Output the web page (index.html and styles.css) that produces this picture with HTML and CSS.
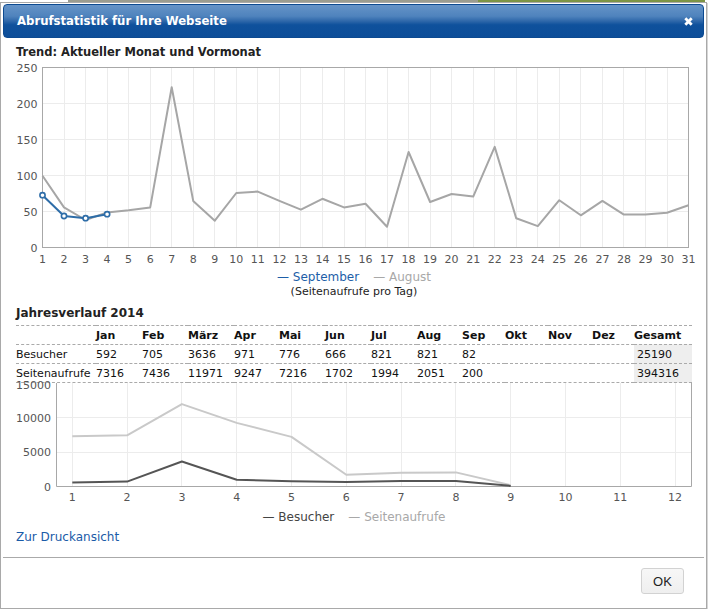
FILE: index.html
```html
<!DOCTYPE html>
<html lang="de">
<head>
<meta charset="utf-8">
<title>Abrufstatistik</title>
<link rel="stylesheet" href="styles.css">
</head>
<body>
<div class="dialog">
  <div class="titlebar">
    <span class="title">Abrufstatistik für Ihre Webseite</span>
    <svg class="close" width="9" height="9" viewBox="0 0 9 9"><path d="M1.3 1.3 L7.7 7.7 M7.7 1.3 L1.3 7.7"/></svg>
  </div>
  <div class="content">
    <h2 class="h-trend">Trend: Aktueller Monat und Vormonat</h2>
    <svg class="chart" width="676" height="209" viewBox="0 0 676 209">
      <path class="grid" d="M48.5 7V187M69.5 7V187M91.5 7V187M112.5 7V187M134.5 7V187M155.5 7V187M177.5 7V187M198.5 7V187M220.5 7V187M241.5 7V187M263.5 7V187M284.5 7V187M306.5 7V187M328.5 7V187M349.5 7V187M371.5 7V187M392.5 7V187M414.5 7V187M435.5 7V187M457.5 7V187M478.5 7V187M500.5 7V187M521.5 7V187M543.5 7V187M564.5 7V187M586.5 7V187M607.5 7V187M629.5 7V187M651.5 7V187M26.5 43.5H672.5M26.5 79.5H672.5M26.5 115.5H672.5M26.5 151.5H672.5"/>
      <rect class="frame" x="26.5" y="7.5" width="646" height="180"/>
      <polyline class="l-aug" points="26.5,115.7 48,147.4 69.6,160 91.1,152.4 112.6,150.3 134.2,147.4 155.7,27.2 177.2,140.9 198.8,160.7 220.3,133 241.8,131.6 263.4,140.9 284.9,149.6 306.4,138.8 328,147.4 349.5,143.8 371,166.8 392.6,92 414.1,142 435.6,134 457.2,136.6 478.7,86.9 500.2,158.2 521.8,166.1 543.3,140.2 564.8,155.3 586.4,140.9 607.9,154.6 629.4,154.6 651,152.7 672.5,145.2"/>
      <polyline class="l-sep" points="26.5,135.2 48,156 69.6,158.2 91.1,154.2"/>
      <g class="dots">
        <circle cx="26.5" cy="135.2" r="2.6"/>
        <circle cx="48" cy="156" r="2.6"/>
        <circle cx="69.6" cy="158.2" r="2.6"/>
        <circle cx="91.1" cy="154.2" r="2.6"/>
      </g>
      <g class="ax ax-y">
        <text x="21.5" y="11.5">250</text>
        <text x="21.5" y="47.5">200</text>
        <text x="21.5" y="83.5">150</text>
        <text x="21.5" y="119.5">100</text>
        <text x="21.5" y="155.5">50</text>
        <text x="21.5" y="191.5">0</text>
      </g>
      <g class="ax ax-x">
        <text x="26.5" y="203">1</text><text x="48" y="203">2</text><text x="69.6" y="203">3</text><text x="91.1" y="203">4</text><text x="112.6" y="203">5</text><text x="134.2" y="203">6</text><text x="155.7" y="203">7</text><text x="177.2" y="203">8</text><text x="198.8" y="203">9</text><text x="220.3" y="203">10</text><text x="241.8" y="203">11</text><text x="263.4" y="203">12</text><text x="284.9" y="203">13</text><text x="306.4" y="203">14</text><text x="328" y="203">15</text><text x="349.5" y="203">16</text><text x="371" y="203">17</text><text x="392.6" y="203">18</text><text x="414.1" y="203">19</text><text x="435.6" y="203">20</text><text x="457.2" y="203">21</text><text x="478.7" y="203">22</text><text x="500.2" y="203">23</text><text x="521.8" y="203">24</text><text x="543.3" y="203">25</text><text x="564.8" y="203">26</text><text x="586.4" y="203">27</text><text x="607.9" y="203">28</text><text x="629.4" y="203">29</text><text x="651" y="203">30</text><text x="672.5" y="203">31</text>
      </g>
    </svg>
    <div class="legend">
      <span class="lg-sep">— September</span>
      <span class="lg-aug">— August</span>
    </div>
    <div class="subtitle">(Seitenaufrufe pro Tag)</div>
    <h2 class="h-year">Jahresverlauf 2014</h2>
    <table class="year">
      <colgroup>
        <col class="w80"><col class="w46"><col class="w46"><col class="w46"><col class="w45"><col class="w46"><col class="w46"><col class="w46"><col class="w45"><col class="w43"><col class="w43"><col class="w44"><col class="w42"><col class="w58">
      </colgroup>
      <thead>
        <tr><th></th><th>Jan</th><th>Feb</th><th>März</th><th>Apr</th><th>Mai</th><th>Jun</th><th>Jul</th><th>Aug</th><th>Sep</th><th>Okt</th><th>Nov</th><th>Dez</th><th>Gesamt</th></tr>
      </thead>
      <tbody>
        <tr><td>Besucher</td><td>592</td><td>705</td><td>3636</td><td>971</td><td>776</td><td>666</td><td>821</td><td>821</td><td>82</td><td></td><td></td><td></td><td class="total">25190</td></tr>
        <tr><td>Seitenaufrufe</td><td>7316</td><td>7436</td><td>11971</td><td>9247</td><td>7216</td><td>1702</td><td>1994</td><td>2051</td><td>200</td><td></td><td></td><td></td><td class="total">394316</td></tr>
      </tbody>
    </table>
    <svg class="chart" width="676" height="126" viewBox="0 0 676 126">
      <path class="grid" d="M56.5 0V103M111.5 0V103M165.5 0V103M220.5 0V103M275.5 0V103M330.5 0V103M385.5 0V103M439.5 0V103M494.5 0V103M549.5 0V103M604.5 0V103M659.5 0V103M40.5 34.5H675.5M40.5 69.5H675.5"/>
      <path class="frame" d="M40.5 0V103.5H675.5V0"/>
      <polyline class="l-views" points="56.3,53.2 111.1,52.3 165.9,21.1 220.7,39.9 275.5,53.9 330.3,91.8 385.1,89.8 439.9,89.4 494.7,102.1"/>
      <polyline class="l-visits" points="56.3,99.4 111.1,98.6 165.9,78.5 220.7,96.8 275.5,98.2 330.3,98.9 385.1,97.9 439.9,97.9 494.7,102.9"/>
      <g class="ax ax-y">
        <text x="35" y="5.5">15000</text>
        <text x="35" y="38.7">10000</text>
        <text x="35" y="73.1">5000</text>
        <text x="35" y="107.5">0</text>
      </g>
      <g class="ax ax-x">
        <text x="56.3" y="118">1</text><text x="111.1" y="118">2</text><text x="165.9" y="118">3</text><text x="220.7" y="118">4</text><text x="275.5" y="118">5</text><text x="330.3" y="118">6</text><text x="385.1" y="118">7</text><text x="439.9" y="118">8</text><text x="494.7" y="118">9</text><text x="549.5" y="118">10</text><text x="604.3" y="118">11</text><text x="659.1" y="118">12</text>
      </g>
    </svg>
    <div class="legend">
      <span class="lg-visits">— Besucher</span>
      <span class="lg-views">— Seitenaufrufe</span>
    </div>
    <a class="print" href="#">Zur Druckansicht</a>
  </div>
  <div class="buttonpane"><button class="ok" type="button">OK</button></div>
</div>
</body>
</html>
```

FILE: styles.css
```css
html {
  background:
    linear-gradient(to right, #fff 0, #fff 68px, #9a9c90 68px, #9a9c90 478px, #7d9445 478px, #7d9445 705px, #fff 705px) 0 0 / 100% 2px no-repeat,
    #fff;
}

body {
  margin: 0;
  font-family: "DejaVu Sans", Verdana, sans-serif;
  color: #222;
}

.dialog {
  box-sizing: border-box;
  width: 707px;
  margin-top: 2px;
  border: 1px solid #a9a9a9;
  padding: 1px 2px;
  background: #fff;
  box-shadow: 1px 1px 0 #d6d6d6;
}

.titlebar {
  box-sizing: border-box;
  height: 34px;
  display: flex;
  align-items: center;
  justify-content: space-between;
  padding: 0 10px 0 13px;
  border: 1px solid #0c4a91;
  border-radius: 4px;
  background: linear-gradient(to bottom, #6593c7 0%, #4f83bd 35%, #2f68aa 50%, #0f519c 62%, #0d4e99 100%);
  color: #fff;
}

.title {
  font-weight: bold;
  font-size: 11.7px;
  line-height: 32px;
}

.close {
  display: block;
  fill: none;
  stroke: #fff;
  stroke-width: 2.8;
}

.content {
  padding: 0 12px 12px 13px;
}

h2 {
  margin: 0;
  font-weight: bold;
  color: #222;
}

.h-trend {
  margin-top: 6px;
  font-size: 11.5px;
  line-height: 16px;
}

.h-year {
  margin: 6px 0 4px;
  font-size: 12px;
  line-height: 16px;
}

.chart {
  display: block;
  overflow: visible;
}

.grid {
  fill: none;
  stroke: #ececec;
  stroke-width: 1;
}

.frame {
  fill: none;
  stroke: #a8a8a8;
  stroke-width: 1;
}

.l-aug {
  fill: none;
  stroke: #a6a6a6;
  stroke-width: 2;
  stroke-linejoin: round;
}

.l-sep {
  fill: none;
  stroke: #2e6da8;
  stroke-width: 2;
  stroke-linejoin: round;
}

.dots circle {
  fill: #fff;
  stroke: #2e6da8;
  stroke-width: 1.6;
}

.l-views {
  fill: none;
  stroke: #c9c9c9;
  stroke-width: 2;
  stroke-linejoin: round;
}

.l-visits {
  fill: none;
  stroke: #555;
  stroke-width: 2;
  stroke-linejoin: round;
}

.ax {
  font-family: "DejaVu Sans", Verdana, sans-serif;
  font-size: 11px;
  fill: #555;
}

.ax-y {
  text-anchor: end;
}

.ax-x {
  text-anchor: middle;
}

.legend {
  display: flex;
  justify-content: center;
  gap: 14px;
  font-size: 12px;
  line-height: 16px;
}

.lg-sep {
  color: #1d5ea8;
}

.lg-aug,
.lg-views {
  color: #a8a8a8;
}

.lg-visits {
  color: #444;
}

.subtitle {
  text-align: center;
  font-size: 11px;
  line-height: 14px;
  color: #222;
}

.year {
  width: 676px;
  table-layout: fixed;
  border-collapse: separate;
  border-spacing: 0;
  font-size: 11px;
  color: #111;
}

.year th,
.year td {
  padding: 2px 0 0;
  line-height: 16px;
  text-align: left;
  white-space: nowrap;
  border-top: 1px dashed #aaa;
}

.year th {
  font-weight: bold;
}

.year tbody tr:last-child td {
  border-bottom: 1px dashed #aaa;
}

.year td.total {
  background: #eee;
  padding-left: 3px;
}

.w80 { width: 80px; }
.w46 { width: 46px; }
.w45 { width: 45px; }
.w44 { width: 44px; }
.w43 { width: 43px; }
.w42 { width: 42px; }
.w58 { width: 58px; }

.print {
  display: block;
  margin-top: 4px;
  font-size: 12px;
  line-height: 16px;
  color: #1a5ba8;
  text-decoration: none;
}

.buttonpane {
  display: flex;
  justify-content: flex-end;
  border-top: 1px solid #aaa;
  padding: 10px 20px 13px;
}

.ok {
  box-sizing: border-box;
  width: 43px;
  height: 26px;
  padding: 0;
  border: 1px solid #d2d2d2;
  border-radius: 3px;
  background: linear-gradient(to bottom, #f7f7f7, #efefef);
  font-family: "Liberation Sans", Arial, sans-serif;
  font-size: 13px;
  color: #222;
}
```
